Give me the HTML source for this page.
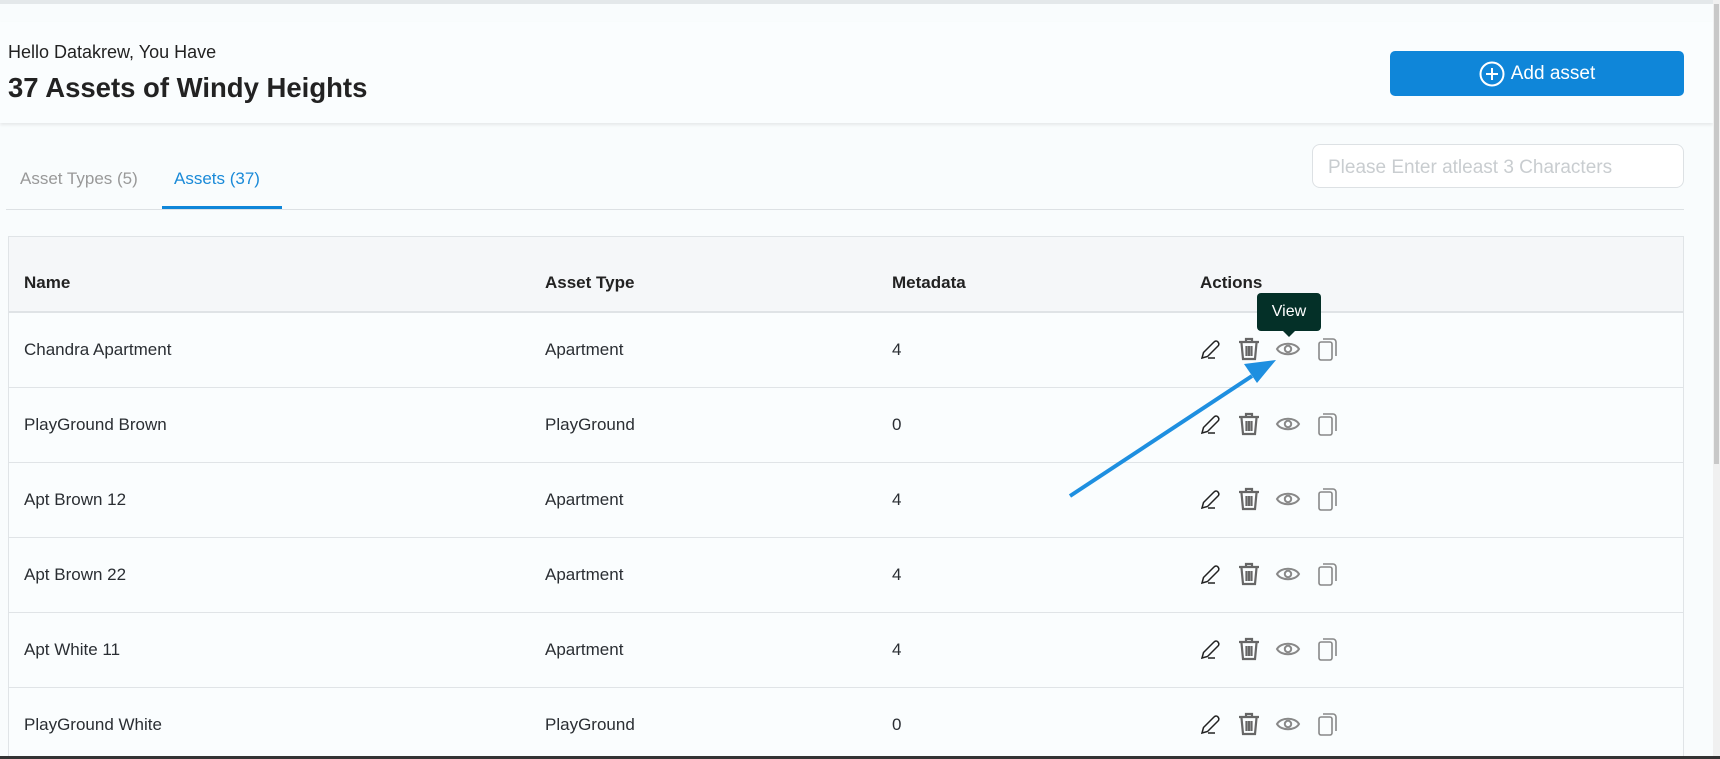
<!DOCTYPE html>
<html style="overflow:hidden"><head><meta charset="utf-8"><style>
*{box-sizing:border-box;margin:0;padding:0}
html,body{width:1720px;height:759px;overflow:hidden}
body{background:#f9fcfd;font-family:"Liberation Sans",sans-serif;color:#1f2328;position:relative}
.topbar{position:absolute;left:0;top:0;width:1713px;height:4px;background:#e4e8ea}
.header{position:absolute;left:0;top:22px;width:1713px;height:101px;background:#fafdfe;box-shadow:0 2px 3px rgba(0,0,0,.08)}
.hello{position:absolute;left:8px;top:42px;font-size:18px;color:#222}
.title{position:absolute;left:8px;top:72px;font-size:27.5px;font-weight:bold;color:#222}
.btn{position:absolute;left:1390px;top:51px;width:294px;height:45px;background:#0f86d9;border-radius:5px;color:#fff;font-size:19px;display:flex;align-items:center;justify-content:center;gap:6px}
.search{position:absolute;left:1312px;top:144px;width:372px;height:44px;border:1px solid #dde1e4;border-radius:8px;background:#fff;font-size:19px;color:#c9cdd0;padding:12px 15px}
.tab{position:absolute;top:169px;font-size:17px}
.tabline{position:absolute;left:6px;top:209px;width:1678px;height:1px;background:#dde1e4}
.tabul{position:absolute;left:162px;top:206px;width:120px;height:3px;background:#0f86d9}
.table{position:absolute;left:8px;top:236px;width:1676px;height:523px;border:1px solid #e0e4e7;border-bottom:0;background:#fafdfe;overflow:hidden}
.thead{height:76px;background:#f5f7f9;border-bottom:2px solid #dfe3e6;position:relative}
.row{height:75px;border-bottom:1px solid #e0e4e7;position:relative}
.c{position:absolute;top:0;height:100%;display:flex;align-items:center;font-size:17px;color:#2a2e33}
.thead .c{font-weight:bold;color:#222;padding-top:18px}
.scroll{position:absolute;left:1713px;top:0;width:7px;height:759px;background:#f0f0f0}
.thumb{position:absolute;left:1714px;top:4px;width:5px;height:460px;background:#c8c8c8}
.bottom{position:absolute;left:0;top:756px;width:1720px;height:3px;background:#333}
.tip{position:absolute;left:1257px;top:293px;width:64px;height:38px;background:#043028;border-radius:4px;color:#fff;font-size:16px;display:flex;align-items:center;justify-content:center}
.tip:after{content:"";position:absolute;left:26px;bottom:-6px;border:6px solid transparent;border-top-color:#043028;border-bottom:0}
</style></head><body>
<div class="topbar"></div>
<div class="header"></div>
<div class="hello">Hello Datakrew, You Have</div>
<div class="title">37 Assets of Windy Heights</div>
<div class="btn"><svg width="26" height="26" viewBox="0 0 26 26"><circle cx="13" cy="13" r="11.5" fill="none" stroke="#fff" stroke-width="2"/><path d="M13 7v12M7 13h12" stroke="#fff" stroke-width="2"/></svg>Add asset</div>
<div class="search">Please Enter atleast 3 Characters</div>
<div class="tab" style="left:20px;color:#999">Asset Types (5)</div>
<div class="tab" style="left:174px;color:#1a8ad8">Assets (37)</div>
<div class="tabline"></div><div class="tabul"></div>
<div class="table">
<div class="thead"><div class="c" style="left:15px">Name</div><div class="c" style="left:536px">Asset Type</div><div class="c" style="left:883px">Metadata</div><div class="c" style="left:1191px">Actions</div></div>
<div class="row"><div class="c" style="left:15px">Chandra Apartment</div><div class="c" style="left:536px">Apartment</div><div class="c" style="left:883px">4</div></div>
<div class="row"><div class="c" style="left:15px">PlayGround Brown</div><div class="c" style="left:536px">PlayGround</div><div class="c" style="left:883px">0</div></div>
<div class="row"><div class="c" style="left:15px">Apt Brown 12</div><div class="c" style="left:536px">Apartment</div><div class="c" style="left:883px">4</div></div>
<div class="row"><div class="c" style="left:15px">Apt Brown 22</div><div class="c" style="left:536px">Apartment</div><div class="c" style="left:883px">4</div></div>
<div class="row"><div class="c" style="left:15px">Apt White 11</div><div class="c" style="left:536px">Apartment</div><div class="c" style="left:883px">4</div></div>
<div class="row"><div class="c" style="left:15px">PlayGround White</div><div class="c" style="left:536px">PlayGround</div><div class="c" style="left:883px">0</div></div>
</div>
<svg style="position:absolute;left:0;top:0" width="1720" height="759">
<defs><g id="ic">
<g transform="translate(0,-11)" fill="none" stroke="#222" stroke-width="1.5"><path d="M2 20l1.5-5.5L14 4c1.3-1.3 3-1.3 4 0s1.3 2.7 0 4L7.5 18.5L2 20z"/><path d="M8 20h7"/></g>
<g transform="translate(38,-12)" fill="none" stroke="#666" stroke-width="2.2"><path d="M1 5h20M8 5V2h6v3M3.5 6l1.5 16h12l1.5-16M8.5 9v10M11 9v10M13.5 9v10"/></g>
<g transform="translate(76,-12)" fill="none" stroke="#888" stroke-width="2"><path d="M1 12c4-7 18-7 22 0c-4 7-18 7-22 0z"/><circle cx="12" cy="12" r="3.2"/></g>
<g transform="translate(118,-12)" fill="none" stroke="#888" stroke-width="1.6"><rect x="1" y="5" width="13" height="18" rx="2"/><path d="M5 2h10a3 3 0 0 1 3 3v14"/></g>
</g></defs>
<use href="#ic" x="1200" y="349"/><use href="#ic" x="1200" y="424"/><use href="#ic" x="1200" y="499"/><use href="#ic" x="1200" y="574"/><use href="#ic" x="1200" y="649"/><use href="#ic" x="1200" y="724"/>
<line x1="1070" y1="496" x2="1252" y2="376" stroke="#1e8fe0" stroke-width="4"/>
<path d="M1276 360l-32 4 13 19z" fill="#1e8fe0"/>
</svg>
<div class="tip">View</div>
<div class="scroll"></div><div class="thumb"></div>
<div class="bottom"></div>
</body></html>
